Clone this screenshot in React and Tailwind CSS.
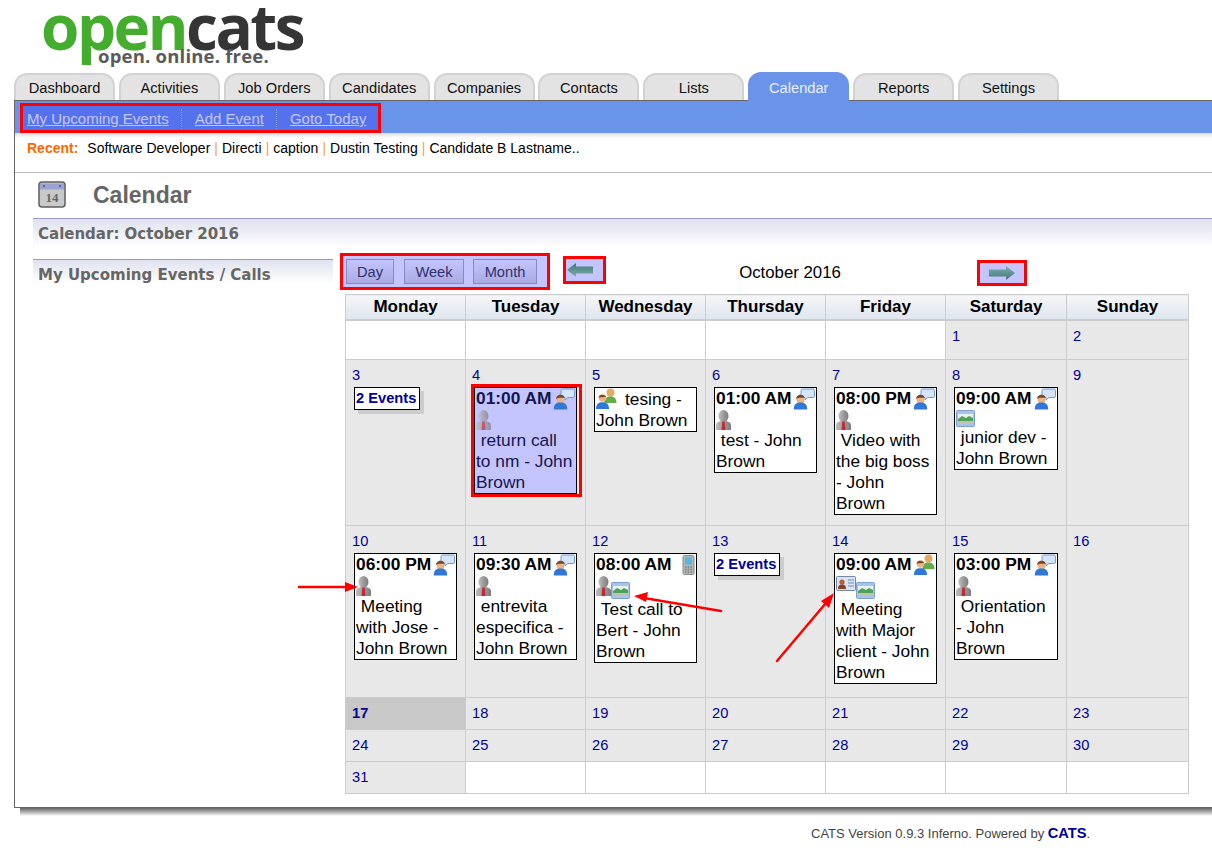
const tabs = ['Dashboard', 'Activities', 'Job Orders', 'Candidates', 'Companies', 'Contacts', 'Lists', 'Calendar', 'Reports', 'Settings'];
const days = ['Monday', 'Tuesday', 'Wednesday', 'Thursday', 'Friday', 'Saturday', 'Sunday'];

const TalkIcon = () => (
  <svg width="22" height="22" viewBox="0 0 22 22" className="shrink-0">
    <path d="M9.500 1h10.500a1.500 1.500 0 0 1 1.500 1.500v5.500a1.500 1.500 0 0 1-1.500 1.500h-5l-3 2.500v-2.500h-2.500a1.500 1.500 0 0 1-1.500-1.500v-5.500a1.500 1.500 0 0 1 1.500-1.500z" fill="#d3e4fb" stroke="#6f9bd6" />
    <circle cx="7.500" cy="11.500" r="4" fill="#e9b487" />
    <path d="M3.200 11c-.3-3.500 3.500-5.300 6.800-3.800l2 2.300c-2.500.4-6.500-.2-7 .6z" fill="#7f4420" />
    <path d="M.8 21.500c0-5.500 2.700-7 6.700-7s6.700 1.500 6.700 7z" fill="#2f78d8" />
  </svg>
);

const TieIcon = () => (
  <svg width="15" height="20" viewBox="0 0 15 20" className="shrink-0">
    <defs>
      <linearGradient id="tieGray" x1="0" y1="0" x2="1" y2="0">
        <stop offset="0" stopColor="#bdbdbd" />
        <stop offset="1" stopColor="#7c7c7c" />
      </linearGradient>
    </defs>
    <ellipse cx="7.500" cy="6" rx="5" ry="6" fill="url(#tieGray)" />
    <path d="M0 20v-4.500c0-3 2.500-4.500 7.500-4.500s7.500 1.500 7.500 4.500v4.500z" fill="url(#tieGray)" />
    <path d="M6.300 11.500h2.400l.8 8.500h-4z" fill="#c4282f" />
  </svg>
);

const MeetingIcon = () => (
  <svg width="21" height="21" viewBox="0 0 21 21" className="shrink-0">
    <circle cx="14.500" cy="4.500" r="4" fill="#e5a95f" />
    <path d="M8.500 15c0-5 2.500-6.500 6-6.500s6 1.500 6 6.500z" fill="#65ab46" />
    <circle cx="6.500" cy="10" r="3.800" fill="#e9b487" />
    <path d="M2.500 9.800c.4-3.800 5.600-4.200 7.800-.8-2.500.3-5.800-.2-7.800.8z" fill="#7f4420" />
    <path d="M0 21c0-5 2.500-6.800 6.500-6.800s6.500 1.800 6.500 6.800z" fill="#2f78d8" />
  </svg>
);

const ScreenIcon = () => (
  <svg width="19" height="17" viewBox="0 0 19 17" className="shrink-0">
    <rect x="0.500" y="0.500" width="18" height="16" rx="1" fill="#a9c4e8" stroke="#7e9fce" />
    <rect x="2" y="4" width="15" height="7" fill="#e6f2ee" />
    <path d="M2 9l4-3 4 2 3-2 4 2v3H2z" fill="#4ca35a" />
    <path d="M3 13h2M7 13h2M11 13h2M15 13h1.500" stroke="#e8c04a" strokeWidth="1.400" />
  </svg>
);

const PhoneIcon = () => (
  <svg width="13" height="20" viewBox="0 0 13 20" className="shrink-0">
    <rect x="1" y="0.500" width="11" height="19" rx="1.500" fill="#b5b9ba" stroke="#85898a" />
    <rect x="3" y="2.500" width="7" height="7" fill="#55b6e4" />
    <path d="M3 12h7M3 14.500h7M3 17h7" stroke="#75797a" strokeWidth="1.300" strokeDasharray="1.500 1.200" />
  </svg>
);

const CardIcon = () => (
  <svg width="20" height="15" viewBox="0 0 20 15" className="shrink-0">
    <rect x="0.500" y="0.500" width="19" height="14" rx="1" fill="#d8e4f4" stroke="#7388a8" />
    <circle cx="6" cy="6" r="2.600" fill="#b5622f" />
    <path d="M2 13c0-3.500 1.500-4.500 4-4.500s4 1 4 4.500z" fill="#8c3f24" />
    <path d="M12 4h6M12 7h6M12 10h6" stroke="#6f8fc2" />
  </svg>
);

const icons = { talk: TalkIcon, tie: TieIcon, meeting: MeetingIcon, screen: ScreenIcon, phone: PhoneIcon, card: CardIcon };

const Event = ({ time, corner, row, title, selected }) => {
  const Corner = corner ? icons[corner] : null;
  return (
    <div className="relative ml-[2px]">
      {selected && <div className="absolute -left-[3px] -right-[5px] -top-[3px] -bottom-[3px] border-[3px] border-[#ff0000]" />}
      <div className={`border border-black px-px text-[17.33px] leading-[21px] ${selected ? 'bg-[#c4c4ff] text-[#15154f]' : 'bg-white text-black'}`}>
        {time && (
          <div className="flex h-[21px] items-center justify-between">
            <b>{time}</b>
            {Corner && <Corner />}
          </div>
        )}
        {row && row.length > 0 && (
          <div className="flex items-start">
            {row.map((name, i) => {
              const Icon = icons[name];
              return (
                <span key={i} className={`${selected ? 'opacity-70' : ''} ${i > 0 ? 'mt-[7px]' : 'mt-px'}`}>
                  <Icon />
                </span>
              );
            })}
          </div>
        )}
        <div>
          {!time && (
            <span className="mr-[8px] inline-block align-[-4px]">
              <MeetingIcon />
            </span>
          )}
          {time && '\u00a0'}
          {title}
        </div>
      </div>
    </div>
  );
};

const TwoEvents = () => (
  <div className="ml-[2px] w-[66px] border border-black bg-white pl-px text-[14.67px] font-bold leading-[21px] text-[#000099] shadow-[4px_4px_0_#cccccc]">
    2 Events
  </div>
);

const Cell = ({ n, white, today, children }) => (
  <td className={`border border-[#cccccc] px-[6px] pb-0 pt-[7px] align-top ${today ? 'bg-[#c8c8c8]' : white ? 'bg-white' : 'bg-[#e8e8e8]'}`}>
    {n && <div className={`text-[14.67px] leading-[17px] text-[#000099] ${today ? 'font-bold' : ''}`}>{n}</div>}
    {children && <div className="mr-[2px] mt-[3px]">{children}</div>}
  </td>
);

const rowTwo = [
  { n: 3, more: true },
  { n: 4, time: '01:00 AM', corner: 'talk', row: ['tie'], title: 'return call to nm - John Brown', selected: true },
  { n: 5, title: 'tesing - John Brown' },
  { n: 6, time: '01:00 AM', corner: 'talk', row: ['tie'], title: 'test - John Brown' },
  { n: 7, time: '08:00 PM', corner: 'talk', row: ['tie'], title: 'Video with the big boss - John Brown' },
  { n: 8, time: '09:00 AM', corner: 'talk', row: ['screen'], title: 'junior dev - John Brown' },
  { n: 9 },
];

const rowThree = [
  { n: 10, time: '06:00 PM', corner: 'talk', row: ['tie'], title: 'Meeting with Jose - John Brown' },
  { n: 11, time: '09:30 AM', corner: 'talk', row: ['tie'], title: 'entrevita especifica - John Brown' },
  { n: 12, time: '08:00 AM', corner: 'phone', row: ['tie', 'screen'], title: 'Test call to Bert - John Brown' },
  { n: 13, more: true },
  { n: 14, time: '09:00 AM', corner: 'meeting', row: ['card', 'screen'], title: 'Meeting with Major client - John Brown' },
  { n: 15, time: '03:00 PM', corner: 'talk', row: ['tie'], title: 'Orientation - John Brown' },
  { n: 16 },
];

const EventRow = ({ cells, height }) => (
  <tr className={height}>
    {cells.map(({ n, more, ...event }) => (
      <Cell key={n} n={n}>
        {more ? <TwoEvents /> : Object.keys(event).length > 0 ? <Event {...event} /> : null}
      </Cell>
    ))}
  </tr>
);

const CalendarTable = () => (
  <table className="ml-[5px] w-[844px] table-fixed border-collapse">
    <colgroup>
      <col className="w-[120px]" />
      <col className="w-[120px]" />
      <col className="w-[120px]" />
      <col className="w-[120px]" />
      <col className="w-[120px]" />
      <col className="w-[121px]" />
      <col className="w-[122px]" />
    </colgroup>
    <thead>
      <tr className="h-[25px]">
        {days.map((d) => (
          <th key={d} className="border border-b-2 border-[#cccccc] bg-gradient-to-b from-[#f5f6f8] to-[#dfe6ef] p-0 text-[17px] font-bold leading-[20px] text-black">
            {d}
          </th>
        ))}
      </tr>
    </thead>
    <tbody>
      <tr className="h-[40px]">
        <Cell white />
        <Cell white />
        <Cell white />
        <Cell white />
        <Cell white />
        <Cell n={1} />
        <Cell n={2} />
      </tr>
      <EventRow cells={rowTwo} height="h-[166px]" />
      <EventRow cells={rowThree} height="h-[172px]" />
      <tr className="h-[32px]">
        <Cell n={17} today />
        {[18, 19, 20, 21, 22, 23].map((n) => <Cell key={n} n={n} />)}
      </tr>
      <tr className="h-[32px]">
        {[24, 25, 26, 27, 28, 29, 30].map((n) => <Cell key={n} n={n} />)}
      </tr>
      <tr className="h-[32px]">
        <Cell n={31} />
        <Cell white />
        <Cell white />
        <Cell white />
        <Cell white />
        <Cell white />
        <Cell white />
      </tr>
    </tbody>
  </table>
);

const ViewButton = ({ label, className }) => (
  <button className={`flex h-[25px] items-center justify-center border border-[#8a8ac0] bg-gradient-to-b from-[#c4c4ff] to-[#aaaae2] text-[14.67px] text-[#30306e] ${className}`}>
    {label}
  </button>
);

const NavArrow = ({ flip }) => (
  <svg width="26" height="14" viewBox="0 0 26 14" className={flip ? 'rotate-180' : ''}>
    <defs>
      <linearGradient id={flip ? 'arrowL' : 'arrowR'} x1="0" y1="0" x2="0" y2="1">
        <stop offset="0" stopColor="#7fb0ae" />
        <stop offset="1" stopColor="#3f7577" />
      </linearGradient>
    </defs>
    <path d="M0 3.500h17V0l9 7-9 7v-3.500H0z" fill={`url(#${flip ? 'arrowL' : 'arrowR'})`} />
  </svg>
);

const Logo = () => (
  <div className="h-[73px] pl-[41px]">
    <div className="flex pt-[1px] font-['Open_Sans',sans-serif] text-[62px] font-bold leading-[50px] tracking-[-2.5px]">
      <span className="text-[#44ad2e]">open</span>
      <span className="text-[#353535]">cats</span>
    </div>
    <div className="-mt-[4px] pl-[57px] font-['Open_Sans',sans-serif] text-[18.500px] font-bold leading-[18px] tracking-[0.2px] text-[#5a5a5a]">
      open. online. free.
    </div>
  </div>
);

const Annotations = () => (
  <svg width="1212" height="853" className="pointer-events-none absolute left-0 top-0">
    <g stroke="#ff0000" strokeWidth="2.500" strokeLinecap="round">
      <path d="M299 587L348 587" />
      <path d="M721 611L644 598" />
      <path d="M777 661L826 603" />
    </g>
    <path d="M358 587L345 582L345 592z M634 596L648 592L646 602z M834 593L821 601L829 608z" fill="#ff0000" />
  </svg>
);

export default function App() {
  return (
    <div className="relative h-[853px] w-[1212px] overflow-hidden bg-white font-['Liberation_Sans',Arial,sans-serif]">
      <Logo />

      <div className="relative z-10 flex h-[27px] items-end gap-[3.9px] pl-[14px]">
        {tabs.map((t) =>
          t === 'Calendar' ? (
            <div key={t} className="-mb-px flex h-[29px] w-[101px] items-center justify-center rounded-t-[13px] bg-[#6a93ea] pt-[2px] text-[14.67px] text-[#e9efff]">
              {t}
            </div>
          ) : (
            <div key={t} className="flex h-[27px] w-[101px] items-center justify-center rounded-t-[13px] border-2 border-b-0 border-[#d2d2d2] bg-[#e3e3e3] text-[14.67px] text-[#111111]">
              {t}
            </div>
          ),
        )}
      </div>

      <div className="ml-[14px] h-[708px] border-b border-l border-[#666666]">
        <div className="flex h-[33px] items-start border-t border-[#666666] bg-[#6a93ea] pl-[5px] pt-[2px]">
          <div className="flex h-[30px] items-center border-[3px] border-[#ff0000] bg-[#5472ee] pl-[4px] pr-[12px] pt-[2px] text-[15px] text-[#c6c6ff] underline">
            <span>My Upcoming Events</span>
            <span className="mx-[12.500px] h-[20px] border-l border-dotted border-[#8fa0f0]" />
            <span>Add Event</span>
            <span className="mx-[12.500px] h-[20px] border-l border-dotted border-[#8fa0f0]" />
            <span>Goto Today</span>
          </div>
        </div>
        <div className="h-[5px] bg-gradient-to-b from-[#dcdcdc] to-white" />

        <div className="flex h-[35px] items-start border-b border-[#bbbbbb] pl-[12px] pt-[1px] text-[14px] leading-[18px] text-black">
          <b className="mr-[9px] text-[#ff6600]">Recent:</b>
          <span>Software Developer</span>
          <span className="mx-[4px] text-[#f5a623]">|</span>
          <span>Directi</span>
          <span className="mx-[4px] text-[#f5a623]">|</span>
          <span>caption</span>
          <span className="mx-[4px] text-[#f5a623]">|</span>
          <span>Dustin Testing</span>
          <span className="mx-[4px] text-[#f5a623]">|</span>
          <span>Candidate B Lastname..</span>
        </div>

        <div className="flex h-[45px] items-start pl-[23px] pt-[8px]">
          <svg width="28" height="27" viewBox="0 0 28 27">
            <rect x="1" y="1" width="26" height="25" rx="3" fill="#c9c9c9" stroke="#5f5f5f" strokeWidth="1.500" />
            <path d="M2 2.500h24v6H2z" fill="#9aa3d0" />
            <circle cx="6" cy="5" r="1" fill="#555" />
            <circle cx="22" cy="5" r="1" fill="#555" />
            <text x="14" y="21" textAnchor="middle" fontFamily="Liberation Serif, serif" fontWeight="700" fontSize="13" fill="#666666">14</text>
          </svg>
          <div className="ml-[27px] text-[23px] font-bold leading-[28px] text-[#666666]">Calendar</div>
        </div>

        <div className="ml-[18px] h-[30px] border-t border-[#9999cc] bg-gradient-to-b from-[#dfe2ee] to-white pl-[5px] pt-[5px] font-['DejaVu_Sans',sans-serif] text-[15px] font-bold leading-[20px] text-[#666666]">
          Calendar: October 2016
        </div>

        <div className="mt-[5px] flex pl-[18px]">
          <div className="w-[307px] shrink-0 pt-[6px]">
            <div className="h-[24px] w-[300px] border-t border-[#9999cc] bg-gradient-to-b from-[#dfe2ee] to-white pl-[5px] pt-[5px] font-['DejaVu_Sans',sans-serif] text-[15px] font-bold leading-[20px] text-[#666666]">
              My Upcoming Events / Calls
            </div>
          </div>
          <div>
            <div className="flex h-[41px] items-start">
              <div className="flex h-[37px] items-center border-[3px] border-[#ff0000] bg-[#c4c4ff] pl-[3px] pr-[10px]">
                <ViewButton label="Day" className="w-[48px]" />
                <ViewButton label="Week" className="ml-[10px] w-[60px]" />
                <ViewButton label="Month" className="ml-[9px] w-[64px]" />
              </div>
              <div className="ml-[13px] mt-[3px] flex h-[28px] w-[43px] items-center border-[3px] border-[#ff0000] bg-[#c4c4ff] pl-[1px]">
                <NavArrow flip />
              </div>
              <div className="mt-[9px] w-[371px] pr-[3px] text-center text-[16.800px] leading-[22px] text-black">October 2016</div>
              <div className="mt-[7px] flex h-[26px] w-[50px] items-center justify-center border-[3px] border-[#ff0000] bg-[#c4c4ff]">
                <NavArrow />
              </div>
            </div>
            <CalendarTable />
          </div>
        </div>
      </div>

      <div className="ml-[20px] h-[8px] bg-gradient-to-b from-[#666666] to-white" />
      <div className="mt-[8px] pl-[811px] text-[13px] leading-[18px] text-[#444444]">
        CATS Version 0.9.3 Inferno. Powered by <b className="text-[14.67px] text-[#000099]">CATS</b>.
      </div>

      <Annotations />
    </div>
  );
}
